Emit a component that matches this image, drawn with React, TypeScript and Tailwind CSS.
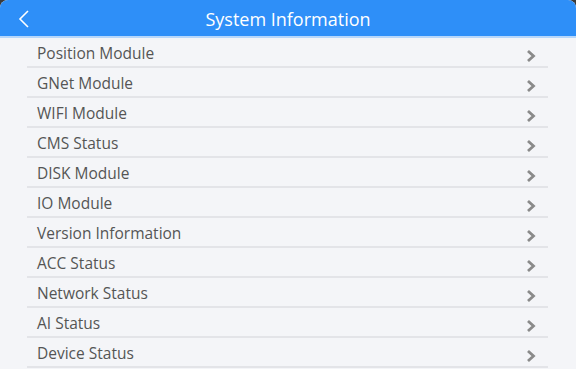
const items = [
  'Position Module',
  'GNet Module',
  'WIFI Module',
  'CMS Status',
  'DISK Module',
  'IO Module',
  'Version Information',
  'ACC Status',
  'Network Status',
  'AI Status',
  'Device Status',
];

const Chevron = () => (
  <svg width="10" height="14" viewBox="0 0 10 14" className="mr-[12px] mt-[8px]">
    <path d="M2 2 L7.5 7 L2 12" fill="none" stroke="#8a8a8a" strokeWidth="2.8" />
  </svg>
);

export default function App() {
  return (
    <div className="w-[576px] h-[369px] bg-[#3a3a3a] overflow-hidden" style={{ fontFamily: '"Open Sans", "Noto Sans", sans-serif' }}>
      <div className="h-full bg-[#f4f5f8] rounded-t-[8px] overflow-hidden">
        <div className="relative h-9 bg-[#2e8ff8] flex items-center justify-center">
          <svg width="12" height="18" viewBox="0 0 12 18" className="absolute left-[18px] top-[10px]">
            <path d="M10 1 L2 9 L10 17" fill="none" stroke="#fff" strokeWidth="1.6" />
          </svg>
          <span className="text-white text-[18px] pt-[2px]">System Information</span>
        </div>
        <div className="h-[2px] bg-[#b7d7fb]" />
        <div className="mx-[27px] w-[521px]">
          {items.map((item) => (
            <div key={item} className="h-[30px] flex items-center justify-between border-b-2 border-[#e3e4e8]">
              <span className="pl-[10px] pt-[3px] text-[15.5px] text-[#555]">{item}</span>
              <Chevron />
            </div>
          ))}
        </div>
      </div>
    </div>
  );
}
